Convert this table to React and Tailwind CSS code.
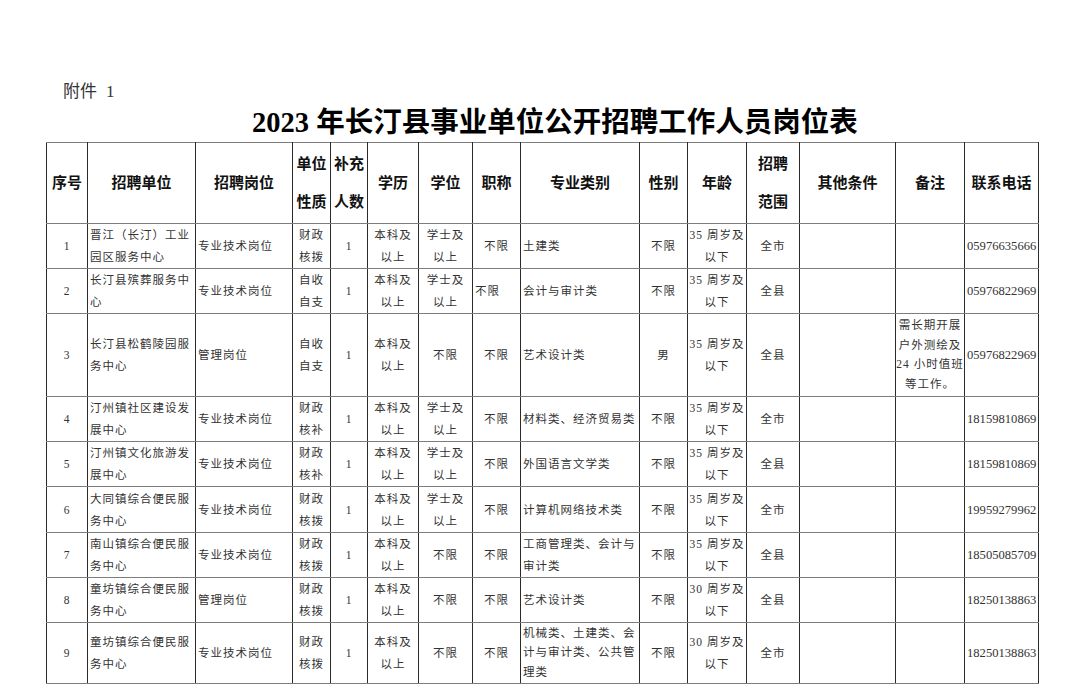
import React from "react";

// column widths, left to right
const colClasses = [
  "w-[41px]",
  "w-[108px]",
  "w-[97px]",
  "w-[38px]",
  "w-[37px]",
  "w-[51px]",
  "w-[54px]",
  "w-[48px]",
  "w-[119px]",
  "w-[48px]",
  "w-[59px]",
  "w-[53px]",
  "w-[96px]",
  "w-[69px]",
  "w-[74px]",
];

// c = centered, l = left
const align = ["c", "l", "l", "c", "c", "c", "c", "c", "l", "c", "c", "c", "c", "c", "l"];

const headers = [
  ["序号"],
  ["招聘单位"],
  ["招聘岗位"],
  ["单位", "性质"],
  ["补充", "人数"],
  ["学历"],
  ["学位"],
  ["职称"],
  ["专业类别"],
  ["性别"],
  ["年龄"],
  ["招聘", "范围"],
  ["其他条件"],
  ["备注"],
  ["联系电话"],
];

const rows = [
  {
    h: "h-[45px]",
    cells: ["1", "晋江（长汀）工业|园区服务中心", "专业技术岗位", "财政|核拨", "1", "本科及|以上", "学士及|以上", "不限", "土建类", "不限", "35 周岁及|以下", "全市", "", "", "05976635666"],
  },
  {
    h: "h-[45px]",
    leftTitle: true,
    cells: ["2", "长汀县殡葬服务中|心", "专业技术岗位", "自收|自支", "1", "本科及|以上", "学士及|以上", "不限", "会计与审计类", "不限", "35 周岁及|以下", "全县", "", "", "05976822969"],
  },
  {
    h: "h-[83px]",
    cells: ["3", "长汀县松鹤陵园服|务中心", "管理岗位", "自收|自支", "1", "本科及|以上", "不限", "不限", "艺术设计类", "男", "35 周岁及|以下", "全县", "", "需长期开展|户外测绘及|24 小时值班|等工作。", "05976822969"],
  },
  {
    h: "h-[45px]",
    cells: ["4", "汀州镇社区建设发|展中心", "专业技术岗位", "财政|核补", "1", "本科及|以上", "学士及|以上", "不限", "材料类、经济贸易类", "不限", "35 周岁及|以下", "全市", "", "", "18159810869"],
  },
  {
    h: "h-[45px]",
    cells: ["5", "汀州镇文化旅游发|展中心", "专业技术岗位", "财政|核补", "1", "本科及|以上", "学士及|以上", "不限", "外国语言文学类", "不限", "35 周岁及|以下", "全县", "", "", "18159810869"],
  },
  {
    h: "h-[46px]",
    cells: ["6", "大同镇综合便民服|务中心", "专业技术岗位", "财政|核拨", "1", "本科及|以上", "学士及|以上", "不限", "计算机网络技术类", "不限", "35 周岁及|以下", "全市", "", "", "19959279962"],
  },
  {
    h: "h-[45px]",
    cells: ["7", "南山镇综合便民服|务中心", "专业技术岗位", "财政|核拨", "1", "本科及|以上", "不限", "不限", "工商管理类、会计与|审计类", "不限", "35 周岁及|以下", "全县", "", "", "18505085709"],
  },
  {
    h: "h-[45px]",
    cells: ["8", "童坊镇综合便民服|务中心", "管理岗位", "财政|核拨", "1", "本科及|以上", "不限", "不限", "艺术设计类", "不限", "30 周岁及|以下", "全县", "", "", "18250138863"],
  },
  {
    h: "h-[61px]",
    cells: ["9", "童坊镇综合便民服|务中心", "专业技术岗位", "财政|核拨", "1", "本科及|以上", "不限", "不限", "机械类、土建类、会|计与审计类、公共管|理类", "不限", "30 周岁及|以下", "全市", "", "", "18250138863"],
  },
];

const Lines = ({ text }) => {
  const parts = text.split("|");
  return parts.map((p, i) => (
    <React.Fragment key={i}>
      {p}
      {i < parts.length - 1 && <br />}
    </React.Fragment>
  ));
};

const cellBorder = "border border-x-[#2a2a2a] border-y-[#7d7d7d]";

export default function App() {
  return (
    <div className="w-[1080px] h-[686px] bg-white overflow-hidden pl-[46px] font-['Liberation_Serif','Noto_Sans_CJK_SC',serif]">
      <div className="pt-[82px] pl-[17px] h-[102px] text-[17px] leading-[20px] text-[#333] whitespace-nowrap">
        附件<span className="pl-[9px]">1</span>
      </div>

      <div className="mt-[5px] h-[35px] pl-[206px] text-[28.5px] leading-[32px] font-bold text-black whitespace-nowrap">
        2023 年长汀县事业单位公开招聘工作人员岗位表
      </div>

      <table className="table-fixed border-collapse w-[992px]">
        <colgroup>
          {colClasses.map((c, i) => (
            <col key={i} className={c} />
          ))}
        </colgroup>
        <thead>
          <tr className="h-[81px]">
            {headers.map((h, i) => (
              <th
                key={i}
                className={`${cellBorder} p-0 text-center align-middle text-[15px] font-bold text-[#111] ${
                  h.length > 1 ? "leading-[38px]" : "leading-[20px]"
                }`}
              >
                <Lines text={h.join("|")} />
              </th>
            ))}
          </tr>
        </thead>
        <tbody>
          {rows.map((r, ri) => (
            <tr key={ri} className={r.h}>
              {r.cells.map((c, ci) => {
                const left = align[ci] === "l" || (ci === 7 && r.leftTitle);
                const multi = c.split("|").length > 2;
                const isPhone = ci === 14;
                return (
                  <td
                    key={ci}
                    className={`${cellBorder} p-0 align-middle text-[#333] ${
                      left ? "text-left pl-[2px]" : "text-center"
                    } ${
                      isPhone
                        ? "text-[12.6px] tracking-normal whitespace-nowrap pl-[1px]"
                        : "text-[11.5px] tracking-[1px]"
                    } ${multi ? "leading-[19.5px]" : "leading-[22px]"}`}
                  >
                    <Lines text={c} />
                  </td>
                );
              })}
            </tr>
          ))}
        </tbody>
      </table>
    </div>
  );
}
